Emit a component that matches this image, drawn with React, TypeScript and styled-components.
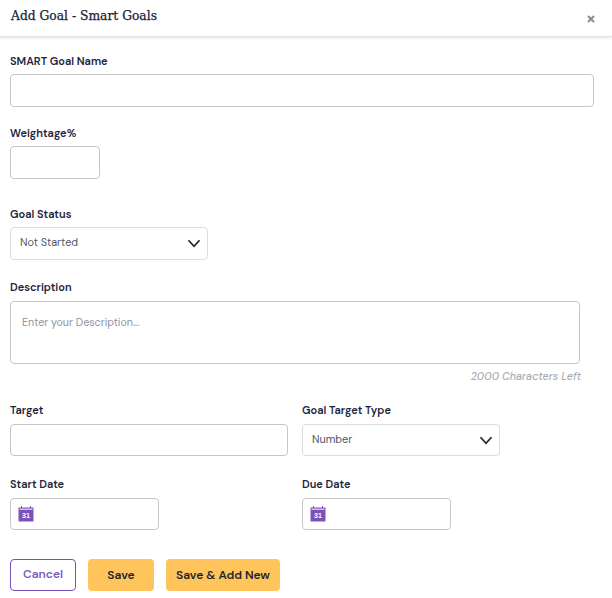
import React from "react";
import styled, { createGlobalStyle } from "styled-components";

const GlobalStyle = createGlobalStyle`
  html, body {
    margin: 0;
    padding: 0;
    background: #fff;
  }
  * {
    box-sizing: border-box;
  }
`;

function Chevron() {
  return (
    <svg width="14" height="9" viewBox="0 0 14 9" fill="none">
      <path d="M1.5 1.2 L7 7.2 L12.5 1.2" stroke="#1c2430" strokeWidth="1.7" />
    </svg>
  );
}

function CloseIcon() {
  return (
    <svg width="8" height="8" viewBox="0 0 8 8" fill="none">
      <path d="M1 1 L7 7 M7 1 L1 7" stroke="#8c8c8c" strokeWidth="2" />
    </svg>
  );
}

function CalendarIcon() {
  return (
    <svg width="16" height="17" viewBox="0 0 16 17">
      <path
        d="M0.5 2.5H3V1h1v1.5h8V1h1v1.5h2.5v14H0.5z"
        fill="#7a52b8"
      />
      <rect x="1.5" y="3.6" width="13" height="1.2" fill="#fff" opacity="0.8" />
      <text
        x="8"
        y="13.4"
        textAnchor="middle"
        fontFamily="'Liberation Sans', sans-serif"
        fontSize="7"
        fontWeight="700"
        fill="#fff"
      >
        31
      </text>
    </svg>
  );
}

export default function App() {
  return (
    <Modal>
      <GlobalStyle />
      <Header>
        <Title>Add Goal - Smart Goals</Title>
        <CloseSlot>
          <CloseIcon />
        </CloseSlot>
      </Header>
      <Body>
        <Label>SMART Goal Name</Label>
        <TextBox $width={584} $height={33} $after={19} />

        <Label>Weightage%</Label>
        <TextBox $width={90} $height={33} $after={28} />

        <Label>Goal Status</Label>
        <SelectBox $width={198} $height={33} $after={20}>
          <span>Not Started</span>
          <Chevron />
        </SelectBox>

        <Label>Description</Label>
        <TextArea>Enter your Description...</TextArea>
        <Counter>2000 Characters Left</Counter>

        <Row>
          <Column>
            <Label>Target</Label>
            <TextBox $width={278} $height={32} $after={21} />
            <Label>Start Date</Label>
            <DateBox>
              <CalendarIcon />
            </DateBox>
          </Column>
          <Column>
            <Label>Goal Target Type</Label>
            <SelectBox $width={198} $height={32} $after={21}>
              <span>Number</span>
              <Chevron />
            </SelectBox>
            <Label>Due Date</Label>
            <DateBox>
              <CalendarIcon />
            </DateBox>
          </Column>
        </Row>

        <Actions>
          <CancelButton>Cancel</CancelButton>
          <PrimaryButton $width={66}>Save</PrimaryButton>
          <PrimaryButton $width={114}>Save &amp; Add New</PrimaryButton>
        </Actions>
      </Body>
    </Modal>
  );
}

interface BoxProps {
  $width: number;
  $height: number;
  $after: number;
}
interface ButtonProps {
  $width: number;
}

const Modal = styled.div`
  width: 612px;
  height: 598px;
  background: #fff;
  overflow: hidden;
  font-family: "DM Sans", Inter, "Noto Sans", sans-serif;
`;
const Header = styled.header`
  align-items: center;
  border-bottom: 1px solid #e4e4e4;
  box-shadow: 0 1px 3px rgba(0, 0, 0, 0.12);
  display: flex;
  height: 37px;
  justify-content: space-between;
  padding: 0 17px 5px 11px;
`;
const Title = styled.h1`
  color: #1c2333;
  font-family: "DejaVu Serif", "Liberation Serif", serif;
  font-size: 12.3px;
  font-weight: 500;
  margin: 0;
  -webkit-text-stroke: 0.25px #1c2333;
`;
const CloseSlot = styled.span`
  display: flex;
  padding-top: 6px;
`;
const Body = styled.div`
  padding: 17px 0 0 10px;
`;
const Label = styled.label`
  color: #1c2540;
  display: block;
  font-size: 11px;
  font-weight: 600;
  height: 13px;
  line-height: 14px;
  margin-bottom: 7px;
`;
const TextBox = styled.div<BoxProps>`
  background: #fff;
  border: 1px solid #c6c6c6;
  border-radius: 4px;
  height: ${(p) => p.$height}px;
  margin-bottom: ${(p) => p.$after}px;
  width: ${(p) => p.$width}px;
`;
const SelectBox = styled.div<BoxProps>`
  align-items: center;
  background: #fff;
  border: 1px solid #dcdcdc;
  border-radius: 4px;
  color: #4f5666;
  display: flex;
  font-size: 10.8px;
  height: ${(p) => p.$height}px;
  justify-content: space-between;
  margin-bottom: ${(p) => p.$after}px;
  padding: 0 6px 0 9px;
  width: ${(p) => p.$width}px;
  > span {
    margin-top: -3px;
  }
`;
const TextArea = styled.div`
  border: 1px solid #c6c6c6;
  border-radius: 4px;
  color: #8f949e;
  font-size: 10.7px;
  height: 63px;
  line-height: 14px;
  margin-top: 8px;
  padding: 13px 11px;
  width: 570px;
`;
const Counter = styled.div`
  color: #a9adb5;
  font-size: 10.7px;
  font-style: italic;
  font-weight: 500;
  height: 14px;
  line-height: 14px;
  margin-top: 5px;
  text-align: right;
  width: 571px;
`;
const Row = styled.div`
  display: grid;
  grid-template-columns: 292px 1fr;
  margin-top: 20px;
  ${Label} {
    margin-bottom: 8px;
  }
`;
const Column = styled.div`
  display: flex;
  flex-direction: column;
`;
const DateBox = styled.div`
  align-items: center;
  border: 1px solid #c6c6c6;
  border-radius: 4px;
  display: flex;
  height: 32px;
  padding: 0 0 1px 7px;
  width: 149px;
`;
const Actions = styled.div`
  display: flex;
  gap: 12px;
  margin-top: 29px;
`;
const CancelButton = styled.button`
  background: #fff;
  border: 1px solid #7a52b8;
  border-radius: 4px;
  color: #7e5ac0;
  font-family: inherit;
  font-size: 12px;
  font-weight: 600;
  height: 32px;
  padding: 0 0 2px;
  width: 66px;
`;
const PrimaryButton = styled.button<ButtonProps>`
  background: #ffc45c;
  border: 0;
  border-radius: 4px;
  color: #1c2333;
  font-family: inherit;
  font-size: 12px;
  font-weight: 600;
  height: 32px;
  padding: 0;
  width: ${(p) => p.$width}px;
`;
